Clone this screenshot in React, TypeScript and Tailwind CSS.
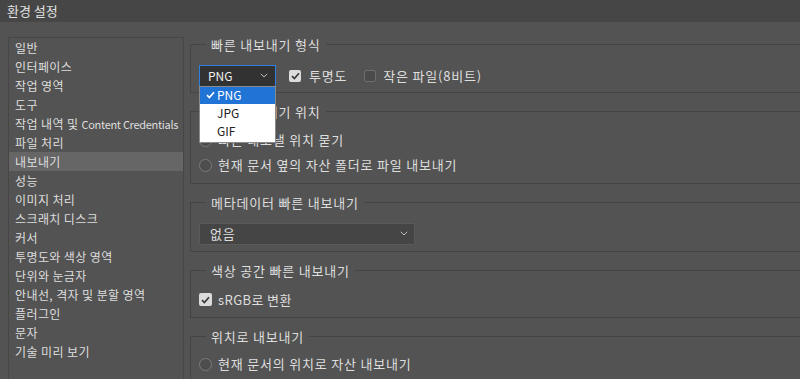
import React from "react";

const items: React.ReactNode[] = [
  "일반",
  "인터페이스",
  "작업 영역",
  "도구",
  "contentcred",
  "파일 처리",
  "내보내기",
  "성능",
  "이미지 처리",
  "스크래치 디스크",
  "커서",
  "투명도와 색상 영역",
  "단위와 눈금자",
  "안내선, 격자 및 분할 영역",
  "플러그인",
  "문자",
  "기술 미리 보기",
];

function Chevron({ className = "" }: { className?: string }) {
  return (
    <svg width="8" height="5" viewBox="0 0 8 5" className={className}>
      <path d="M0.8 0.8 L4 4 L7.2 0.8" fill="none" stroke="#bdbdbd" strokeWidth="1" />
    </svg>
  );
}

function Check({ color }: { color: string }) {
  return (
    <svg width="9" height="8" viewBox="0 0 9 8">
      <path d="M1 4.2 L3.4 6.6 L8 1.2" fill="none" stroke={color} strokeWidth="1.7" />
    </svg>
  );
}

function Radio() {
  return <span className="w-[13px] h-[13px] rounded-full border border-[#7b7b7b] bg-[#4d4d4d] shrink-0" />;
}

function Group({
  title,
  className = "",
  children,
}: {
  title: string;
  className?: string;
  children: React.ReactNode;
}) {
  return (
    <fieldset className={`border border-[#444444] w-[640px] pl-[8px] ${className}`}>
      <legend className="ml-[7px] px-[5px] leading-[17px] text-[13px] tracking-[0.8px]">{title}</legend>
      {children}
    </fieldset>
  );
}

export default function App() {
  return (
    <div
      className="w-[800px] h-[379px] overflow-hidden bg-[#535353] text-[#dedede] text-[12px]"
      style={{ fontFamily: '"Noto Sans CJK KR", "Noto Sans", sans-serif' }}
    >
      <div className="h-[22px] bg-[#464646] flex items-center pl-[7px] text-[13px] text-[#e2e2e2]">
        환경 설정
      </div>
      <div className="flex">
        <div className="ml-[8px] mt-[15px] w-[176px] h-[360px] shrink-0 border border-[#464646]">
          {items.map((t, i) => (
            <div
              key={i}
              className={`h-[19px] leading-[19px] pl-[6px] whitespace-nowrap tracking-[0.4px] ${
                t === "내보내기" ? "bg-[#666666]" : ""
              }`}
            >
              {t === "contentcred" ? (
                <>
                  작업 내역 및{" "}
                  <span className="text-[11px] tracking-[-0.3px]">Content Credentials</span>
                </>
              ) : (
                t
              )}
            </div>
          ))}
        </div>
        <div className="ml-[6px] mt-[13.5px] flex flex-col gap-[10px]">
          <Group title="빠른 내보내기 형식" className="pt-[12px] pb-[5px]">
            <div className="flex items-center h-[22px]">
              <div className="relative">
                <div className="w-[77px] h-[22px] bg-[#323232] border border-[#2d7fe0] flex items-center justify-between pl-[8px] pr-[7px] text-[#f0f0f0]">
                  <span>PNG</span>
                  <Chevron />
                </div>
                <div className="absolute left-0 top-[21px] w-[77px] bg-white border border-[#8a8a8a] text-[#222] z-10 pb-[2px]">
                  <div className="h-[17px] bg-[#1f74d6] text-white flex items-center">
                    <span className="w-[17px] flex justify-center pl-[3px]">
                      <Check color="#ffffff" />
                    </span>
                    <span>PNG</span>
                  </div>
                  <div className="h-[18px] flex items-center pl-[17px]">JPG</div>
                  <div className="h-[18px] flex items-center pl-[17px]">GIF</div>
                </div>
              </div>
              <span className="ml-[13px] w-[12px] h-[12px] rounded-[2px] bg-[#dcdcdc] flex items-center justify-center">
                <Check color="#3a3a3a" />
              </span>
              <span className="ml-[8px] text-[13px] tracking-[0.8px]">투명도</span>
              <span className="ml-[17px] w-[12px] h-[12px] rounded-[2px] bg-[#4b4b4b] border border-[#6e6e6e]" />
              <span className="ml-[7px] text-[13px] tracking-[0.8px]">작은 파일(8비트)</span>
            </div>
          </Group>
          <Group title="빠른 내보내기 위치" className="pt-[8px] pb-[5px]">
            <div className="flex items-center gap-[6px] h-[25px]">
              <Radio />
              <span className="text-[13px] tracking-[0.8px]">빠른 내보낼 위치 묻기</span>
            </div>
            <div className="flex items-center gap-[6px] h-[25px]">
              <Radio />
              <span className="text-[13px] tracking-[0.8px]">현재 문서 옆의 자산 폴더로 파일 내보내기</span>
            </div>
          </Group>
          <Group title="메타데이터 빠른 내보내기" className="pt-[12px] pb-[6px]">
            <div className="w-[216px] h-[22px] bg-[#454545] border border-[#5a5a5a] rounded-[2px] flex items-center justify-between pl-[10px] pr-[6px]">
              <span className="text-[13px] tracking-[0.8px]">없음</span>
              <Chevron />
            </div>
          </Group>
          <Group title="색상 공간 빠른 내보내기" className="pt-[11px] pb-[7px]">
            <div className="flex items-center h-[20px]">
              <span className="w-[13px] h-[13px] rounded-[2px] bg-[#dcdcdc] flex items-center justify-center">
                <Check color="#3a3a3a" />
              </span>
              <span className="ml-[6px] text-[13px] tracking-[0.4px]">sRGB로 변환</span>
            </div>
          </Group>
          <Group title="위치로 내보내기" className="pt-[7px] pb-[10px]">
            <div className="flex items-center gap-[6px] h-[25px]">
              <Radio />
              <span className="text-[13px] tracking-[0.8px]">현재 문서의 위치로 자산 내보내기</span>
            </div>
          </Group>
        </div>
      </div>
    </div>
  );
}
